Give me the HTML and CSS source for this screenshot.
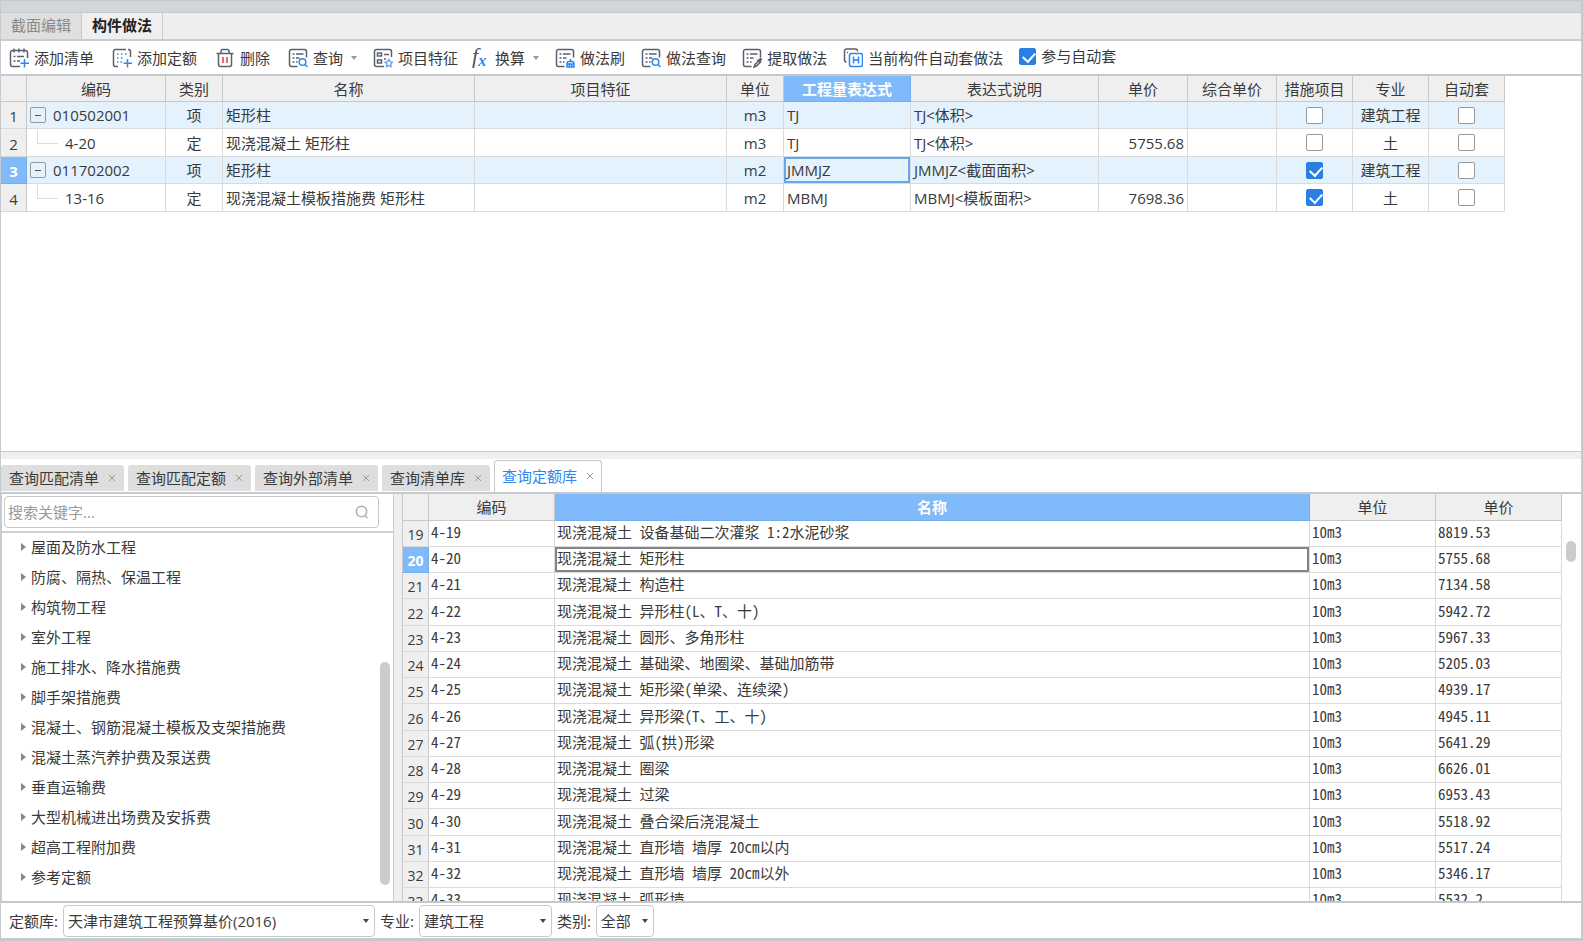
FILE: index.html
```html
<!DOCTYPE html>
<html lang="zh-CN">
<head>
<meta charset="utf-8">
<title>构件做法</title>
<link rel="stylesheet" href="styles.css">
</head>
<body>
<svg class="sprite" aria-hidden="true">
  <symbol id="sheet" viewBox="0 0 20 20">
    <path d="M18.5 9.500V3.500a2 2 0 0 0-2-2h-13a2 2 0 0 0-2 2v13a2 2 0 0 0 2 2h6M4.500 6h2M8 6h7.500M4.500 10h2M8 10h3.500M4.500 14h2M8 14h1.500"/>
  </symbol>
  <symbol id="close" viewBox="0 0 8 8"><path d="M1 1l6 6M7 1L1 7"/></symbol>
</svg>
<div class="app">
  <div class="titlebar"></div>
  <nav class="main-tabs">
    <button class="main-tab">截面编辑</button>
    <button class="main-tab main-tab--active">构件做法</button>
  </nav>
  <div class="toolbar">
    <div class="tools tools--edit">
      <button class="tool"><svg class="icon" viewBox="0 0 20 20"><path d="M18.500 10V4.500a2 2 0 0 0-2-2h-13a2 2 0 0 0-2 2v12a2 2 0 0 0 2 2H11M5 0.500v4M10 0.500v4M15 0.500v4M4.500 8.500h2M8 8.500h7M4.500 13h2M8 13h3"/><path class="accent" d="M15.500 11v8.500M11.500 15.200h8.500"/></svg>添加清单</button>
      <button class="tool"><svg class="icon" viewBox="0 0 20 20"><path d="M18.500 9V3.500a2 2 0 0 0-2-2H16M6 18.500H3.500a2 2 0 0 1-2-2v-13a2 2 0 0 1 2-2H14"/><path class="accent" d="M15.500 11v8.500M11.500 15.200h8.500M5 6h1.500M9 6h1.500M13 6h1.500M5 10h1.500M9 10h1.500M5 14h1.500M8.500 14H10"/></svg>添加定额</button>
      <button class="tool"><svg class="icon" viewBox="0 0 20 20"><path d="M1.500 5.500h17M6 5V3a1.500 1.500 0 0 1 1.500-1.500h5A1.500 1.500 0 0 1 14 3v2M3.500 6v10.500a2 2 0 0 0 2 2h9a2 2 0 0 0 2-2V6"/><path class="danger" d="M8 9v6M12 9v6"/></svg>删除</button>
      <button class="tool"><svg class="icon" viewBox="0 0 20 20"><use href="#sheet"/><circle class="accent" cx="14.500" cy="14" r="3.300"/><path class="accent" d="M17 16.500l2.500 2.500"/></svg>查询<span class="arrow"></span></button>
    </div>
    <div class="tools tools--feature">
      <button class="tool"><svg class="icon" viewBox="0 0 20 20"><path d="M18.500 9V3.500a2 2 0 0 0-2-2h-13a2 2 0 0 0-2 2v13a2 2 0 0 0 2 2H11M4.500 5h4v3h-4zM4.500 12h4v3h-4zM11 6.500h5M11 11h2"/><path class="accent-light" d="M15.800 11.500l1.300 2.200 2.400.5-1.700 1.900.3 2.400-2.300-1-2.300 1 .3-2.400-1.700-1.900 2.400-.5z"/></svg>项目特征</button>
      <button class="tool"><span class="fx">f<sub>x</sub></span>换算<span class="arrow"></span></button>
    </div>
    <div class="tools tools--method">
      <button class="tool"><svg class="icon" viewBox="0 0 20 20"><use href="#sheet"/><path class="accent" d="M15.500 11v2.500M12 19v-3.500a2 2 0 0 1 2-2h3a2 2 0 0 1 2 2V19zM12 16h7M14.300 16.500V19M16.700 16.500V19"/></svg>做法刷</button>
      <button class="tool"><svg class="icon" viewBox="0 0 20 20"><use href="#sheet"/><circle class="accent" cx="14.500" cy="14" r="3.300"/><path class="accent" d="M17 16.500l2.500 2.500"/></svg>做法查询</button>
      <button class="tool"><svg class="icon" viewBox="0 0 20 20"><use href="#sheet"/><path d="M12 19l1-2.500 4-4 1.500 1.500-4 4z"/><path class="solid" d="M14.500 12l2-.500 2-2 2 2-2 2-.5 2z"/></svg>提取做法</button>
      <button class="tool"><svg class="icon" viewBox="0 0 20 20"><path d="M14.500 3.500v-.5a2 2 0 0 0-2-2h-9a2 2 0 0 0-2 2v9a2 2 0 0 0 2 2M4 4.500h1"/><path class="accent" d="M8.500 5.500h9a2 2 0 0 1 2 2v9a2 2 0 0 1-2 2h-9a2 2 0 0 1-2-2v-9a2 2 0 0 1 2-2zM10.500 8.500v7M15.500 8.500v7M10.500 12h5"/></svg>当前构件自动套做法</button>
      <label class="auto-apply"><input class="check" type="checkbox" checked>参与自动套</label>
    </div>
  </div>

  <main class="upper">
    <table class="grid items">
      <colgroup><col class="w-num"><col class="w-code"><col class="w-kind"><col class="w-name"><col class="w-name"><col class="w-kind"><col class="w-expr"><col class="w-desc"><col class="w-price"><col class="w-price"><col class="w-flag"><col class="w-flag"><col class="w-flag"></colgroup>
      <thead>
        <tr><th></th><th>编码</th><th>类别</th><th>名称</th><th>项目特征</th><th>单位</th><th class="current">工程量表达式</th><th>表达式说明</th><th>单价</th><th>综合单价</th><th>措施项目</th><th>专业</th><th>自动套</th></tr>
      </thead>
      <tbody>
        <tr class="parent"><th>1</th><td class="code"><div class="node"><button class="toggle" aria-label="折叠"></button>010502001</div></td><td class="mid">项</td><td>矩形柱</td><td></td><td class="mid">m3</td><td>TJ</td><td>TJ&lt;体积&gt;</td><td></td><td></td><td class="mid"><input class="check" type="checkbox" aria-label="措施项目"></td><td class="mid">建筑工程</td><td class="mid"><input class="check" type="checkbox" aria-label="自动套"></td></tr>
        <tr class="child"><th>2</th><td class="code"><div class="node"><span class="branch"></span>4-20</div></td><td class="mid">定</td><td>现浇混凝土 矩形柱</td><td></td><td class="mid">m3</td><td>TJ</td><td>TJ&lt;体积&gt;</td><td class="num">5755.68</td><td></td><td class="mid"><input class="check" type="checkbox" aria-label="措施项目"></td><td class="mid">土</td><td class="mid"><input class="check" type="checkbox" aria-label="自动套"></td></tr>
        <tr class="parent"><th class="current">3</th><td class="code"><div class="node"><button class="toggle" aria-label="折叠"></button>011702002</div></td><td class="mid">项</td><td>矩形柱</td><td></td><td class="mid">m2</td><td class="focus">JMMJZ</td><td>JMMJZ&lt;截面面积&gt;</td><td></td><td></td><td class="mid"><input class="check" type="checkbox" aria-label="措施项目" checked></td><td class="mid">建筑工程</td><td class="mid"><input class="check" type="checkbox" aria-label="自动套"></td></tr>
        <tr class="child"><th>4</th><td class="code"><div class="node"><span class="branch"></span>13-16</div></td><td class="mid">定</td><td>现浇混凝土模板措施费 矩形柱</td><td></td><td class="mid">m2</td><td>MBMJ</td><td>MBMJ&lt;模板面积&gt;</td><td class="num">7698.36</td><td></td><td class="mid"><input class="check" type="checkbox" aria-label="措施项目" checked></td><td class="mid">土</td><td class="mid"><input class="check" type="checkbox" aria-label="自动套"></td></tr>
      </tbody>
    </table>
  </main>

  <nav class="query-tabs">
    <button class="query-tab">查询匹配清单<svg class="close"><use href="#close"/></svg></button>
    <button class="query-tab">查询匹配定额<svg class="close"><use href="#close"/></svg></button>
    <button class="query-tab">查询外部清单<svg class="close"><use href="#close"/></svg></button>
    <button class="query-tab">查询清单库<svg class="close"><use href="#close"/></svg></button>
    <button class="query-tab query-tab--active">查询定额库<svg class="close"><use href="#close"/></svg></button>
  </nav>

  <section class="lower">
    <aside class="catalog">
      <div class="search">
        <label class="search-box"><input class="search-input" type="text" placeholder="搜索关键字..." aria-label="搜索关键字"><svg class="search-icon" viewBox="0 0 14 14"><circle cx="6.500" cy="6.500" r="5.200"/><path d="M10 10.500l2.500 2.500"/></svg></label>
      </div>
      <div class="catalog-body">
        <ul class="tree">
          <li>屋面及防水工程</li>
          <li>防腐、隔热、保温工程</li>
          <li>构筑物工程</li>
          <li>室外工程</li>
          <li>施工排水、降水措施费</li>
          <li>脚手架措施费</li>
          <li>混凝土、钢筋混凝土模板及支架措施费</li>
          <li>混凝土蒸汽养护费及泵送费</li>
          <li>垂直运输费</li>
          <li>大型机械进出场费及安拆费</li>
          <li>超高工程附加费</li>
          <li>参考定额</li>
        </ul>
        <div class="scroll scroll--tree"><span class="thumb"></span></div>
      </div>
    </aside>
    <div class="quota">
      <table class="grid quotas">
        <colgroup><col class="w-num"><col class="w-cell"><col><col class="w-cell"><col class="w-cell"></colgroup>
        <thead><tr><th></th><th>编码</th><th class="current">名称</th><th>单位</th><th>单价</th></tr></thead>
        <tbody>
          <tr><th>19</th><td>4-19</td><td>现浇混凝土 设备基础二次灌浆 1:2水泥砂浆</td><td>10m3</td><td>8819.53</td></tr>
          <tr><th class="current">20</th><td>4-20</td><td class="focus">现浇混凝土 矩形柱</td><td>10m3</td><td>5755.68</td></tr>
          <tr><th>21</th><td>4-21</td><td>现浇混凝土 构造柱</td><td>10m3</td><td>7134.58</td></tr>
          <tr><th>22</th><td>4-22</td><td>现浇混凝土 异形柱(L、T、十)</td><td>10m3</td><td>5942.72</td></tr>
          <tr><th>23</th><td>4-23</td><td>现浇混凝土 圆形、多角形柱</td><td>10m3</td><td>5967.33</td></tr>
          <tr><th>24</th><td>4-24</td><td>现浇混凝土 基础梁、地圈梁、基础加筋带</td><td>10m3</td><td>5205.03</td></tr>
          <tr><th>25</th><td>4-25</td><td>现浇混凝土 矩形梁(单梁、连续梁)</td><td>10m3</td><td>4939.17</td></tr>
          <tr><th>26</th><td>4-26</td><td>现浇混凝土 异形梁(T、工、十)</td><td>10m3</td><td>4945.11</td></tr>
          <tr><th>27</th><td>4-27</td><td>现浇混凝土 弧(拱)形梁</td><td>10m3</td><td>5641.29</td></tr>
          <tr><th>28</th><td>4-28</td><td>现浇混凝土 圈梁</td><td>10m3</td><td>6626.01</td></tr>
          <tr><th>29</th><td>4-29</td><td>现浇混凝土 过梁</td><td>10m3</td><td>6953.43</td></tr>
          <tr><th>30</th><td>4-30</td><td>现浇混凝土 叠合梁后浇混凝土</td><td>10m3</td><td>5518.92</td></tr>
          <tr><th>31</th><td>4-31</td><td>现浇混凝土 直形墙 墙厚 20cm以内</td><td>10m3</td><td>5517.24</td></tr>
          <tr><th>32</th><td>4-32</td><td>现浇混凝土 直形墙 墙厚 20cm以外</td><td>10m3</td><td>5346.17</td></tr>
          <tr><th>33</th><td>4-33</td><td>现浇混凝土 弧形墙</td><td>10m3</td><td>5532.2</td></tr>
        </tbody>
      </table>
      <div class="scroll scroll--quota"><span class="thumb"></span></div>
    </div>
  </section>

  <footer class="filters">
    <label for="library">定额库:</label>
    <span class="select select--library"><select id="library"><option>天津市建筑工程预算基价(2016)</option></select></span>
    <label for="major">专业:</label>
    <span class="select select--major"><select id="major"><option>建筑工程</option></select></span>
    <label for="kind">类别:</label>
    <span class="select select--kind"><select id="kind"><option>全部</option></select></span>
  </footer>
</div>
</body>
</html>
```
FILE: styles.css
```css
* { box-sizing: border-box; }

body {
  margin: 0;
  color: #3a3a3a;
  background: #fff;
  font: 15px/20px "Open Sans", "Noto Sans CJK SC", sans-serif;
}

button, input, select {
  margin: 0;
  padding: 0;
  border: 0;
  background: none;
  color: inherit;
  font: inherit;
}

.sprite { display: none; }

.app {
  display: flex;
  flex-direction: column;
  height: 100vh;
  border: solid #c6c9cd;
  border-width: 0 2px 3px 1px;
}

.titlebar {
  flex: none;
  height: 13px;
  background: #d3d5db;
  border: solid #c5c9ce;
  border-width: 1px 0;
}

/* Main tabs */
.main-tabs {
  display: flex;
  flex: none;
  height: 28px;
  background: #eee;
  border-bottom: 2px solid #c9cdd1;
}

.main-tab {
  padding: 0 10px 2px;
  background: #dfdfdf;
  border-right: 1px solid #c9cccf;
  color: #888;
}

.main-tab--active {
  background: #efefef;
  color: #222;
  font-weight: 700;
}

/* Toolbar */
.toolbar {
  display: flex;
  flex: none;
  gap: 16px;
  height: 35px;
  padding: 0 8px;
  border-bottom: 2px solid #c5c8ca;
  white-space: nowrap;
}

.tools { display: flex; align-items: center; }
.tools--edit { gap: 18px; }
.tools--feature { gap: 14px; }
.tools--method { gap: 16px; }

.tool { display: flex; align-items: center; gap: 5px; }

.icon {
  width: 20px;
  height: 20px;
  fill: none;
  stroke: #5a6070;
  stroke-width: 1.500;
}

.icon .accent { stroke: #2f86f0; }
.icon .accent-light { stroke: #6aaaf5; }
.icon .danger { stroke: #e03a3a; }
.icon .solid { fill: #5a6070; stroke: none; }

.fx {
  width: 18px;
  padding-bottom: 4px;
  color: #4c5264;
  font: italic 22px/20px "Liberation Serif", serif;
  text-align: left;
}

.fx sub {
  color: #2f86f0;
  font-size: 16px;
  font-weight: 700;
  line-height: 0;
  vertical-align: -3px;
}

.arrow {
  margin-left: 3px;
  border: solid transparent;
  border-width: 4px 3px 0;
  border-top-color: #999;
}

.auto-apply {
  display: flex;
  align-items: center;
  gap: 5px;
  padding-bottom: 3px;
}

.check {
  display: block;
  width: 17px;
  height: 17px;
  appearance: none;
  background: #fff;
  border: 1px solid #999;
  border-radius: 2px;
}

.check:checked { background: #2a80e2; border-color: #2a80e2; }

.check:checked::after {
  content: "";
  display: block;
  width: 6px;
  height: 10px;
  margin: 1px 0 0 5px;
  border: solid #fff;
  border-width: 0 2px 2px 0;
  transform: rotate(42deg);
}

/* Grids */
.upper {
  flex: none;
  height: 40vh;
  overflow: hidden;
  border-bottom: 1px solid #c9cccf;
}

.grid {
  border-spacing: 0;
  table-layout: fixed;
}

.grid th, .grid td {
  padding: 0 3px;
  overflow: hidden;
  border: solid #dadada;
  border-width: 0 1px 1px 0;
  text-align: left;
  white-space: nowrap;
}

.grid th {
  padding: 0;
  background: #efefef;
  border-color: #c8c8c8;
  font-weight: 400;
  text-align: center;
}

.grid thead th { height: 26px; }
.grid tbody th { padding-top: 2px; border-bottom-color: #dadada; }

.grid th.current {
  background: #80bafa;
  border-color: #72aff2;
  color: #fff;
  font-weight: 700;
}

.items { width: 1504px; }
.items .parent { height: 27px; }
.items .child { height: 28px; }
.items .parent td { background: #e4f2fe; }
.grid .mid { text-align: center; }
.grid .num { text-align: right; }
.grid .mid .check { margin: 0 auto; }
.items .focus { box-shadow: inset 0 0 0 2px #66a7ea; }
.items .code { padding: 0; }

.w-num { width: 26px; }
.w-code { width: 139px; }
.w-kind { width: 57px; }
.w-name { width: 252px; }
.w-expr { width: 127px; }
.w-desc { width: 188px; }
.w-price { width: 89px; }
.w-flag { width: 76px; }
.w-cell { width: 126px; }

.node {
  display: flex;
  align-items: center;
  height: 26px;
}

.toggle {
  display: grid;
  place-items: center;
  width: 16px;
  height: 16px;
  margin: 0 7px 0 3px;
  border: 1px solid #999;
  border-radius: 2px;
}

.toggle::before {
  content: "";
  width: 6px;
  height: 1px;
  background: #555;
}

.branch {
  align-self: flex-start;
  width: 21px;
  height: 14px;
  margin: 0 7px 0 10px;
  border: solid #dcdcdc;
  border-width: 0 0 1px 1px;
}

/* Query tabs */
.query-tabs {
  display: flex;
  flex: none;
  align-items: flex-end;
  gap: 4px;
  height: 42px;
  border-top: 7px solid #efefef;
  border-bottom: 2px solid #c6cace;
}

.query-tab {
  display: flex;
  align-items: center;
  gap: 9px;
  height: 26px;
  margin-bottom: 1px;
  padding: 0 8px 1px;
  background: #dedede;
  border-radius: 3px 3px 0 0;
}

.query-tab--active {
  height: 32px;
  margin-bottom: 0;
  padding: 0 7px 1px;
  background: #fff;
  border: solid #c3c8ce;
  border-width: 1px 1px 0;
  color: #2f86f0;
}

.close {
  width: 8px;
  height: 8px;
  fill: none;
  stroke: #999;
}

/* Lower area */
.lower {
  display: flex;
  flex: 1;
  gap: 8px;
  min-height: 0;
  background: #efefef;
}

.catalog {
  display: flex;
  flex-direction: column;
  width: 393px;
  background: #fff;
  border: solid #cbced1;
  border-width: 0 1px;
}

.search {
  padding: 2px 14px 3px 2px;
  border-bottom: 2px solid #cdd0d3;
}

.search-box {
  display: flex;
  align-items: center;
  height: 32px;
  padding: 0 9px 0 3px;
  border: 1px solid #c9c9c9;
  border-radius: 4px;
}

.search-input { flex: 1; min-width: 0; outline: 0; }
.search-input::placeholder { color: #999; }

.search-icon {
  width: 14px;
  height: 14px;
  fill: none;
  stroke: #b0b0b0;
  stroke-width: 1.500;
}

.catalog-body {
  display: flex;
  flex: 1;
  min-height: 0;
}

.tree {
  flex: 1;
  margin: 0;
  padding: 0 0 0 19px;
  list-style: none;
}

.tree li {
  display: flex;
  align-items: center;
  gap: 5px;
  height: 30px;
  padding-bottom: 2px;
  white-space: nowrap;
}

.tree li::before {
  content: "";
  border: solid transparent;
  border-width: 4px 0 4px 5px;
  border-left-color: #888;
}

.scroll { flex: none; }

.thumb {
  display: block;
  width: 10px;
  border-radius: 5px;
  background: #ccc;
}

.scroll--tree { width: 13px; padding-top: 129px; }
.scroll--tree .thumb { height: 223px; }
.scroll--quota { width: 19px; padding: 47px 0 0 4px; }
.scroll--quota .thumb { height: 21px; }

.quota {
  display: flex;
  flex: 1;
  align-items: flex-start;
  min-width: 0;
  overflow: hidden;
  background: #fff;
  border-left: 1px solid #c8c8c8;
}

.quotas { flex: 1; width: 100%; }
.quotas thead th { height: 27px; }
.quotas tbody tr { height: 26px; }
.quotas tbody tr:nth-child(4n) { height: 27px; }
.quotas tbody th { padding-top: 3px; font-size: 14px; }
.quotas td {
  padding: 0 2px 3px;
  font-family: "Noto Sans Mono CJK SC", "Noto Sans CJK SC", monospace;
}
.quotas .focus { box-shadow: inset 0 0 0 2px #858585; }

/* Filters */
.filters {
  display: flex;
  flex: none;
  align-items: center;
  gap: 5px;
  height: 37px;
  padding: 0 8px;
  border-top: 2px solid #c6c9cc;
}

.select {
  display: grid;
  align-items: center;
}

.select select {
  grid-area: 1 / 1;
  width: 100%;
  height: 32px;
  padding: 0 4px;
  appearance: none;
  border: 1px solid #c9c9c9;
  border-radius: 4px;
}

.select::after {
  content: "";
  grid-area: 1 / 1;
  justify-self: end;
  margin-right: 6px;
  border: solid transparent;
  border-width: 4px 3px 0;
  border-top-color: #444;
  pointer-events: none;
}

.select--library { width: 312px; }
.select--major { width: 133px; }
.select--kind { width: 58px; }
```
